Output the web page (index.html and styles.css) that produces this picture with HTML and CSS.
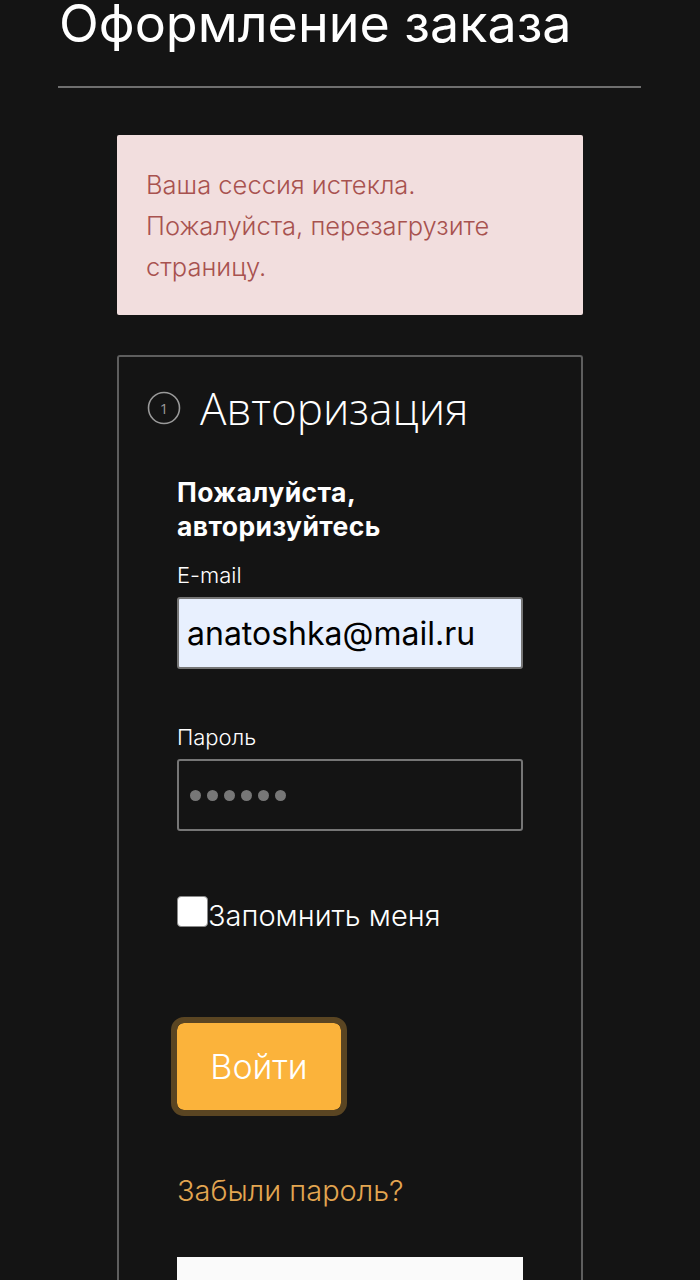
FILE: index.html
```html
<!DOCTYPE html>
<html lang="ru">
<head>
    <meta charset="UTF-8">
    <meta name="viewport" content="width=device-width, initial-scale=1.0">
    <title>Оформление заказа</title>
    <link rel="stylesheet" href="styles.css">
</head>
<body>
    <div class="page">
        <h1 class="page-title">Оформление заказа</h1>
        <hr class="divider">

        <div class="checkout">
            <div class="alert">
                Ваша сессия истекла.<br>
                Пожалуйста, перезагрузите<br>
                страницу.
            </div>

            <section class="step">
                <div class="step-head">
                    <svg class="step-num" width="34" height="34" viewBox="0 0 34 34">
                        <circle cx="17" cy="17" r="15.5" fill="none" stroke="#9a9a9a" stroke-width="1.6"/>
                        <text x="17" y="22.5" text-anchor="middle" font-family="Open Sans, sans-serif" font-size="15" fill="#9a9a9a">1</text>
                    </svg>
                    <h2>Авторизация</h2>
                </div>

                <form class="login">
                    <p class="login-title">Пожалуйста,<br>авторизуйтесь</p>

                    <label for="email">E-mail</label>
                    <input type="text" id="email" class="field field-filled" value="anatoshka@mail.ru">

                    <label class="label-gap">Пароль</label>
                    <div class="field field-pass">
                        <span class="dot"></span><span class="dot"></span><span class="dot"></span>
                        <span class="dot"></span><span class="dot"></span><span class="dot"></span>
                    </div>

                    <label class="remember">
                        <span class="box"></span>Запомнить меня
                    </label>

                    <button type="button" class="btn">Войти</button>

                    <a href="#" class="forgot">Забыли пароль?</a>

                    <div class="social"></div>
                </form>
            </section>
        </div>
    </div>
</body>
</html>
```

FILE: styles.css
```css
body {
    margin: 0;
    padding: 0;
    background-color: #141414;
    font-family: Inter, Roboto, sans-serif;
    color: #fff;
    overflow: hidden;
}

.page {
    width: 583px;
    margin-left: 58px;
}

.page-title {
    margin: 0 0 0 1px;
    padding-top: 1px;
    font-size: 52px;
    font-weight: 400;
    line-height: 46px;
}

.divider {
    border: none;
    height: 2px;
    background-color: #6f6f6f;
    margin: 39px 0 0;
}

.checkout {
    width: 466px;
    margin: 47px 0 0 59px;
}

.alert {
    background-color: #f2dede;
    color: #a8524f;
    font-weight: 300;
    font-size: 25.5px;
    line-height: 41px;
    padding: 29px 29px 28px;
    border-radius: 2px;
}

.step {
    margin-top: 40px;
    border: 2px solid #5e5e5e;
    border-bottom: none;
    border-radius: 3px 3px 0 0;
    padding: 0 57px 0 58px;
    height: 940px;
}

.step-head {
    display: flex;
    align-items: center;
    margin: 31px 0 0 -30px;
}

.step-num {
    flex-shrink: 0;
}

.step-head h2 {
    margin: 0 0 0 19px;
    font-family: "Open Sans", sans-serif;
    font-weight: 300;
    font-size: 44px;
    line-height: 40px;
}

.login {
    display: flex;
    flex-direction: column;
    align-items: flex-start;
}

.login-title {
    margin: 47px 0 0;
    font-size: 26.5px;
    font-weight: 700;
    line-height: 34px;
    letter-spacing: 0.4px;
}

label {
    font-size: 22px;
    line-height: 30px;
    font-weight: 300;
    margin-top: 17px;
}

.label-gap {
    margin-top: 53px;
}

.field {
    box-sizing: border-box;
    width: 346px;
    height: 72px;
    margin-top: 7px;
    border: 2px solid #767676;
    border-radius: 3px;
    font-family: Inter, sans-serif;
    font-size: 32px;
    padding: 0 8px;
}

.field-filled {
    background-color: #e8f0fe;
    color: #000;
}

.field-pass {
    display: flex;
    align-items: center;
    gap: 6px;
    padding-left: 11px;
    background-color: transparent;
}

.dot {
    width: 11px;
    height: 11px;
    border-radius: 50%;
    background-color: #777;
}

.remember {
    display: flex;
    align-items: center;
    font-size: 29px;
    line-height: 34px;
    margin-top: 68px;
}

.box {
    width: 29px;
    height: 29px;
    background: #fff;
    border: 1px solid #8a8a8a;
    border-radius: 4px;
    margin-top: -10px;
}

.btn {
    margin: 90px 0 0;
    width: 164px;
    height: 87px;
    background-color: #fbb33b;
    color: #fff;
    border: none;
    border-radius: 7px;
    outline: 6px solid #5a4522;
    font-family: Inter, sans-serif;
    font-size: 34px;
    font-weight: 300;
    cursor: pointer;
}

.forgot {
    margin-top: 64px;
    color: #e3a651;
    font-size: 29px;
    line-height: 34px;
    font-weight: 300;
    text-decoration: none;
}

.social {
    margin-top: 49px;
    width: 346px;
    height: 40px;
    background-color: #fafafa;
}
```
